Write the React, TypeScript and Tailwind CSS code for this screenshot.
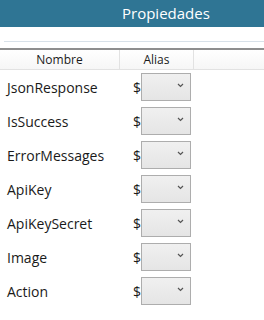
const rows = ['JsonResponse', 'IsSuccess', 'ErrorMessages', 'ApiKey', 'ApiKeySecret', 'Image', 'Action']

function AliasSelect() {
  return (
    <div className="w-[50px] h-[28px] border border-[#adadad] bg-gradient-to-b from-[#f0f0f0] to-[#e5e5e5] flex items-center justify-end pr-[6px]">
      <svg width="7" height="5" viewBox="0 0 7 5" className="mt-[-3px]">
        <path d="M1 1 L3.5 3.5 L6 1" fill="none" stroke="#555" strokeWidth="1.2" />
      </svg>
    </div>
  )
}

export default function App() {
  return (
    <div className="w-[264px] h-[320px] bg-white overflow-hidden font-['Open_Sans','Noto_Sans',sans-serif]">
      <div className="h-[27px] bg-[#2f7594] text-white text-[15px] leading-[27px] pl-[122px]">
        Propiedades
      </div>
      <div className="mt-[14px] ml-[4px] h-px bg-[#d8e1e9]" />
      <div className="mt-[6px] h-[2px] bg-[#8e8e8e]" />
      <div className="flex h-[20px] border-b border-[#e2e2e2] bg-gradient-to-b from-white to-[#f6f6f6] text-[12px] text-[#1a1a1a]">
        <div className="w-[120px] border-r border-[#e2e2e2] flex items-center justify-center">Nombre</div>
        <div className="w-[74px] border-r border-[#e2e2e2] flex items-center justify-center">Alias</div>
        <div className="flex-1" />
      </div>
      {rows.map((name) => (
        <div key={name} className="flex items-center h-[34px] text-[14px] text-[#1a1a1a]">
          <div className="w-[133px] pl-[7px]">{name}</div>
          <span className="w-[8px]">$</span>
          <AliasSelect />
        </div>
      ))}
    </div>
  )
}
